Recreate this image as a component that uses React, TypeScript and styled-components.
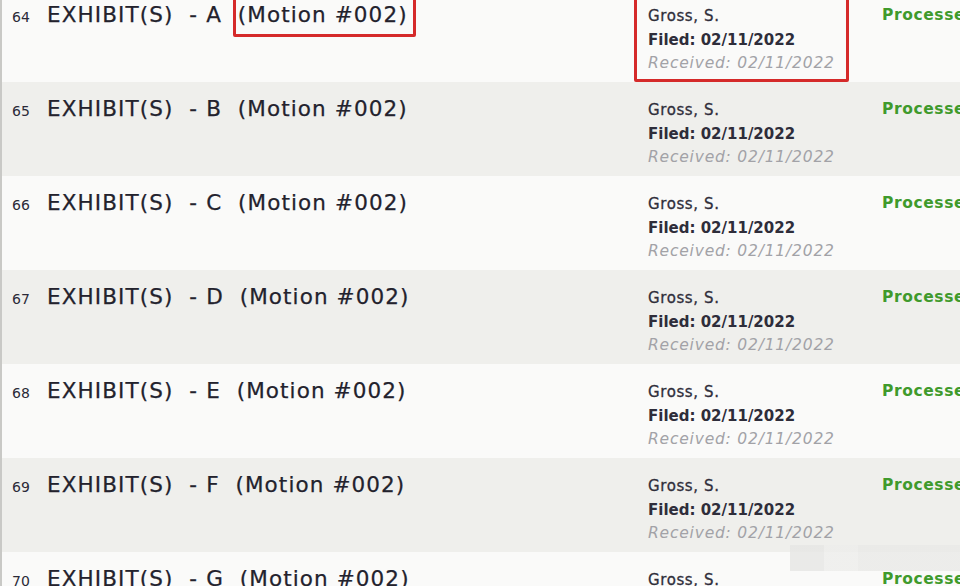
import styled, { createGlobalStyle } from "styled-components";

const Global = createGlobalStyle`
  html, body {
    margin: 0;
    padding: 0;
    background: #fafaf9;
    overflow: hidden;
  }
  body {
    font-family: "DejaVu Sans", Verdana, sans-serif;
    color: #2b2a38;
  }
`;

const Page = styled.div`
  width: 960px;
  height: 586px;
  overflow: hidden;
  position: relative;
  border-left: 2px solid #c9c9c6;
  box-sizing: border-box;
`;

const List = styled.div`
  margin-top: -12px;
  display: flex;
  flex-direction: column;
`;

const Row = styled.div<{ $shaded: boolean }>`
  height: 94px;
  flex-shrink: 0;
  display: grid;
  grid-template-columns: 592px 234px 1fr;
  background: ${(p) => (p.$shaded ? "#efefec" : "#fafaf9")};
  position: relative;
`;

const TitleCell = styled.div`
  display: flex;
  align-items: baseline;
  padding: 14px 0 0 10px;
`;

const Num = styled.span`
  font-size: 14px;
  width: 35px;
  color: #2b2a38;
`;

const Title = styled.span`
  font-size: 21.5px;
  letter-spacing: 1.1px;
  white-space: pre;
  color: #23222d;
  -webkit-text-stroke: 0.25px #23222d;
`;

const Marked = styled.span<{ $boxed: boolean }>`
  position: relative;
  &::after {
    content: "";
    display: ${(p) => (p.$boxed ? "block" : "none")};
    position: absolute;
    left: -5px;
    right: -8px;
    top: -12px;
    bottom: -10px;
    border: 3px solid #d52a2a;
    border-radius: 2px;
  }
`;

const InfoCell = styled.div<{ $boxed: boolean }>`
  display: flex;
  flex-direction: column;
  padding: 17px 0 0 54px;
  position: relative;
  white-space: nowrap;
  &::after {
    content: "";
    display: ${(p) => (p.$boxed ? "block" : "none")};
    position: absolute;
    left: 40px;
    width: 215px;
    top: 6px;
    height: 88px;
    border: 3px solid #d52a2a;
    border-radius: 2px;
    box-sizing: border-box;
  }
`;

const Filer = styled.span`
  font-size: 15px;
  line-height: 23px;
  letter-spacing: 0.6px;
  color: #2f2e3b;
  -webkit-text-stroke: 0.3px #2f2e3b;
`;

const Filed = styled.span`
  font-size: 15px;
  font-weight: bold;
  line-height: 24px;
  color: #2e2d3a;
`;

const Received = styled.span`
  font-size: 15.5px;
  font-style: italic;
  line-height: 23px;
  letter-spacing: 0.8px;
  color: #a2a2a7;
`;

const StatusCell = styled.div`
  padding: 17px 0 0 54px;
  overflow: hidden;
  white-space: nowrap;
`;

const Status = styled.span`
  font-size: 15.5px;
  font-weight: bold;
  letter-spacing: 0.6px;
  color: #3f9a2c;
`;

const Smudge = styled.div`
  position: absolute;
  right: 0;
  top: 545px;
  width: 170px;
  height: 26px;
  background: linear-gradient(90deg, #e6e6e4 0 20%, #ededeb 20% 40%, #e9e9e7 40% 100%);
  opacity: 0.8;
`;

const rows = [
  { n: 64, l: "A" },
  { n: 65, l: "B" },
  { n: 66, l: "C" },
  { n: 67, l: "D" },
  { n: 68, l: "E" },
  { n: 69, l: "F" },
  { n: 70, l: "G" },
];

export default function App() {
  return (
    <>
      <Global />
      <Page>
        <List>
          {rows.map((r, i) => (
            <Row key={r.n} $shaded={i % 2 === 1}>
              <TitleCell>
                <Num>{r.n}</Num>
                <Title>
                  {`EXHIBIT(S)  - ${r.l}  `}
                  <Marked $boxed={i === 0}>(Motion #002)</Marked>
                </Title>
              </TitleCell>
              <InfoCell $boxed={i === 0}>
                <Filer>Gross, S.</Filer>
                <Filed>Filed: 02/11/2022</Filed>
                <Received>Received: 02/11/2022</Received>
              </InfoCell>
              <StatusCell>
                <Status>Processed</Status>
              </StatusCell>
            </Row>
          ))}
        </List>
        <Smudge />
      </Page>
    </>
  );
}
